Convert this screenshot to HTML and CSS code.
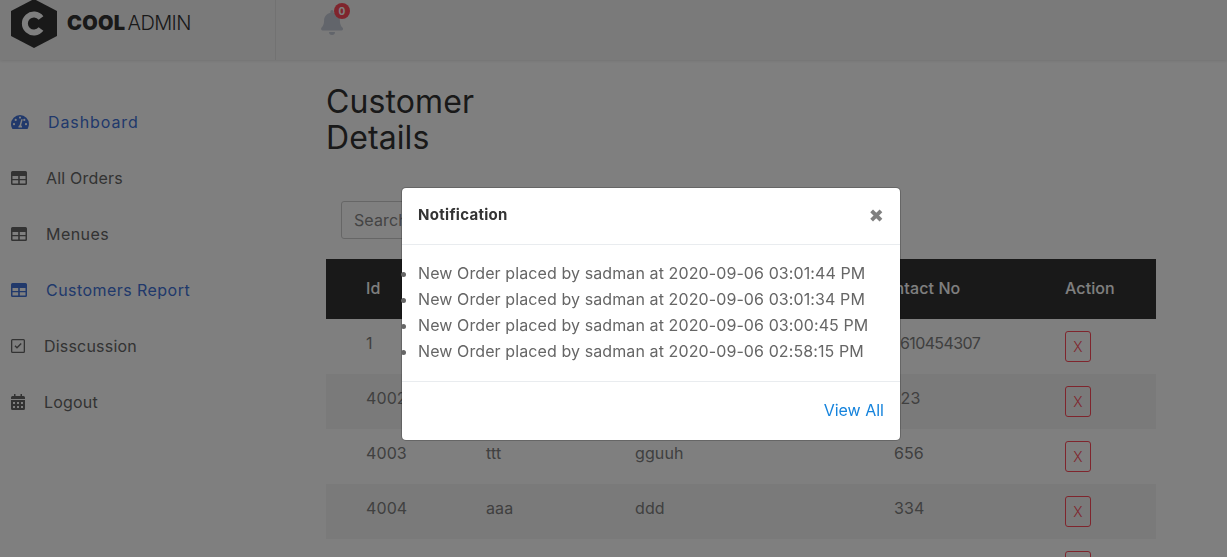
FILE: index.html
```html
<!DOCTYPE html>
<html lang="en">
<head>
    <meta charset="UTF-8">
    <meta name="viewport" content="width=device-width, initial-scale=1.0">
    <title>Customer Details</title>
    <link rel="stylesheet" href="styles.css">
</head>
<body>
    <header class="topbar">
        <div class="brand">
            <svg class="brand-logo" viewBox="0 0 46 50" width="46" height="50">
                <polygon points="23,0 46,12 46,37 23,49 0,37 0,12" fill="#333"/>
                <path d="M30 19a9 9 0 1 0 0 11" fill="none" stroke="#fff" stroke-width="6"/>
            </svg>
            <span class="brand-name"><b>COOL</b> ADMIN</span>
        </div>
        <div class="bell-wrap">
            <svg class="bell" viewBox="0 0 24 26" width="24" height="26">
                <path d="M12 26a3 3 0 0 0 3-3H9a3 3 0 0 0 3 3zM22.500 18.600c-1-1-2.600-2.600-2.600-7.300 0-3.800-2.700-6.800-6.300-7.600V2.500a1.600 1.600 0 0 0-3.200 0v1.200C6.800 4.500 4.100 7.500 4.100 11.300c0 4.700-1.600 6.300-2.600 7.300-.9 1-.2 3 1.100 3h19c1.300 0 2-2 .9-3z" fill="#c4cad6"/>
            </svg>
            <span class="badge">0</span>
        </div>
    </header>

    <div class="layout">
        <nav class="sidebar">
            <a class="nav-item nav-active" href="#">
                <svg class="nav-icon" viewBox="0 0 18 16" width="18" height="16"><path fill-rule="evenodd" d="M9 1a9 9 0 0 0-9 9c0 1.700.5 3.300 1.300 4.700.2.200.5.300.8.300h13.800c.3 0 .6-.1.8-.3A9 9 0 0 0 18 10a9 9 0 0 0-9-9zM9 2.500a1.100 1.100 0 1 1 0 2.200 1.100 1.100 0 0 1 0-2.200zM3 11.300a1.100 1.100 0 1 1 0-2.200 1.100 1.100 0 0 1 0 2.200zM4.700 7a1.100 1.100 0 1 1 0-2.200 1.100 1.100 0 0 1 0 2.200zM11 13.500H7.500c-.3-1 .3-2 1.100-2.300L10.200 5.500c.1-.4.500-.6.900-.5.400.1.600.5.500.9l-1.500 5.300c.8.500 1.200 1.600.9 2.300zM13.300 7a1.100 1.100 0 1 1 0-2.200 1.100 1.100 0 0 1 0 2.200zM15 11.300a1.100 1.100 0 1 1 0-2.200 1.100 1.100 0 0 1 0 2.200z"/></svg>
                <span class="nav-label nav-label-wide">Dashboard</span>
            </a>
            <a class="nav-item" href="#">
                <svg class="nav-icon" viewBox="0 0 16 14" width="16" height="14"><path fill-rule="evenodd" d="M1.500 0h13A1.500 1.500 0 0 1 16 1.500v11a1.500 1.500 0 0 1-1.500 1.500h-13A1.500 1.500 0 0 1 0 12.500v-11A1.500 1.500 0 0 1 1.500 0zM1.500 5v3h5.700V5zm7.300 0v3h5.700V5zM1.500 9.200v3.300h5.700V9.200zm7.300 0v3.300h5.700V9.200z"/></svg>
                <span class="nav-label nav-label-tight">All Orders</span>
            </a>
            <a class="nav-item" href="#">
                <svg class="nav-icon" viewBox="0 0 16 14" width="16" height="14"><path fill-rule="evenodd" d="M1.500 0h13A1.500 1.500 0 0 1 16 1.500v11a1.500 1.500 0 0 1-1.500 1.500h-13A1.500 1.500 0 0 1 0 12.500v-11A1.500 1.500 0 0 1 1.500 0zM1.500 5v3h5.700V5zm7.300 0v3h5.700V5zM1.500 9.200v3.300h5.700V9.200zm7.300 0v3.300h5.700V9.200z"/></svg>
                <span class="nav-label">Menues</span>
            </a>
            <a class="nav-item nav-active" href="#">
                <svg class="nav-icon" viewBox="0 0 16 14" width="16" height="14"><path fill-rule="evenodd" d="M1.500 0h13A1.500 1.500 0 0 1 16 1.500v11a1.500 1.500 0 0 1-1.500 1.500h-13A1.500 1.500 0 0 1 0 12.500v-11A1.500 1.500 0 0 1 1.500 0zM1.500 5v3h5.700V5zm7.300 0v3h5.700V5zM1.500 9.200v3.300h5.700V9.200zm7.300 0v3.300h5.700V9.200z"/></svg>
                <span class="nav-label">Customers Report</span>
            </a>
            <a class="nav-item" href="#">
                <svg class="nav-icon" viewBox="0 0 14 14" width="14" height="14"><path fill-rule="evenodd" d="M1.500 0h11A1.500 1.500 0 0 1 14 1.500v11a1.500 1.500 0 0 1-1.500 1.500h-11A1.500 1.500 0 0 1 0 12.500v-11A1.500 1.500 0 0 1 1.500 0zm0 1.300a.2.200 0 0 0-.2.200v11c0 .1.100.2.200.2h11a.2.200 0 0 0 .2-.2v-11a.2.200 0 0 0-.2-.2z"/><path d="M3.500 7.200l2.500 2.500 4.700-4.700-1-1-3.700 3.700-1.500-1.500z"/></svg>
                <span class="nav-label nav-label-tight">Disscussion</span>
            </a>
            <a class="nav-item" href="#">
                <svg class="nav-icon" viewBox="0 0 14 16" width="14" height="16"><path fill-rule="evenodd" d="M3 0h1.500v2h5V0H11v2h1.500A1.500 1.500 0 0 1 14 3.500V5H0V3.500A1.500 1.500 0 0 1 1.500 2H3zM0 6h14v8.500a1.500 1.500 0 0 1-1.500 1.500h-11A1.500 1.500 0 0 1 0 14.500zm2 2v2h2V8zm4 0v2h2V8zm4 0v2h2V8zm-8 4v2h2v-2zm4 0v2h2v-2zm4 0v2h2v-2z"/></svg>
                <span class="nav-label nav-label-tight">Logout</span>
            </a>
        </nav>

        <main class="content">
            <h2 class="page-title">Customer<br>Details</h2>
            <div class="search-row">
                <input class="search-input" type="text" placeholder="Search">
            </div>
            <table class="customers">
                <colgroup>
                    <col class="col-id"><col class="col-name"><col class="col-addr"><col class="col-phone"><col class="col-action">
                </colgroup>
                <thead>
                    <tr><th>Id</th><th>Name</th><th>Address</th><th class="th-contact">Contact No</th><th>Action</th></tr>
                </thead>
                <tbody>
                    <tr><td>1</td><td></td><td></td><td class="td-long">1610454307</td><td><button class="del-btn">X</button></td></tr>
                    <tr><td>4002</td><td></td><td></td><td>123</td><td><button class="del-btn">X</button></td></tr>
                    <tr><td>4003</td><td>ttt</td><td>gguuh</td><td>656</td><td><button class="del-btn">X</button></td></tr>
                    <tr><td>4004</td><td>aaa</td><td>ddd</td><td>334</td><td><button class="del-btn">X</button></td></tr>
                    <tr><td></td><td></td><td></td><td></td><td><button class="del-btn">X</button></td></tr>
                </tbody>
            </table>
        </main>
    </div>

    <div class="backdrop"></div>

    <div class="modal">
        <div class="modal-header">
            <h5 class="modal-title">Notification</h5>
            <span class="modal-close">&#10006;</span>
        </div>
        <div class="modal-body">
            <ul class="notif-list">
                <li>New Order placed by sadman at 2020-09-06 03:01:44 PM</li>
                <li>New Order placed by sadman at 2020-09-06 03:01:34 PM</li>
                <li>New Order placed by sadman at 2020-09-06 03:00:45 PM</li>
                <li>New Order placed by sadman at 2020-09-06 02:58:15 PM</li>
            </ul>
        </div>
        <div class="modal-footer">
            <a class="view-all" href="#">View All</a>
        </div>
    </div>
</body>
</html>
```

FILE: styles.css
```css
html, body {
    height: 100%;
}

body {
    font-family: Inter, "Open Sans", sans-serif;
    font-size: 16px;
    letter-spacing: 0.1px;
    color: #666;
    background-color: #fff;
    margin: 0;
    overflow: hidden;
}

a {
    text-decoration: none;
}

.topbar {
    display: flex;
    height: 60px;
    background-color: #f5f5f5;
    box-shadow: 0 1px 3px rgba(0, 0, 0, 0.1);
}

.brand {
    display: flex;
    align-items: center;
    gap: 10px;
    box-sizing: border-box;
    width: 276px;
    padding: 0 0 14px 11px;
    border-right: 1px solid #e5e5e5;
}

.brand-logo {
    flex: none;
    margin-top: 2px;
}

.brand-name {
    font-size: 20px;
    font-weight: 300;
    color: #333;
    letter-spacing: -0.6px;
    word-spacing: -3px;
}

.brand-name b {
    font-weight: 900;
    letter-spacing: 0.3px;
}

.bell-wrap {
    position: relative;
    margin: 9px 0 0 44px;
}

.badge {
    position: absolute;
    top: -6px;
    left: 14px;
    width: 16px;
    height: 16px;
    border-radius: 50%;
    background-color: #ff4b5a;
    color: #fff;
    font-size: 10px;
    font-weight: 700;
    line-height: 16px;
    text-align: center;
}

.layout {
    display: flex;
}

.sidebar {
    width: 326px;
    flex: none;
    padding-top: 34px;
}

.nav-item {
    display: flex;
    align-items: center;
    height: 56px;
    padding-left: 11px;
    letter-spacing: 0.45px;
    color: #666;
    fill: #666;
}

.nav-active {
    color: #4272d7;
    fill: #4272d7;
}

.nav-icon {
    flex: none;
}

.nav-label {
    margin-left: 19px;
}

.nav-label-wide {
    letter-spacing: 0.9px;
}

.nav-label-tight {
    letter-spacing: 0.2px;
}

.content {
    width: 830px;
}

.page-title {
    margin: 24px 0 0;
    font-size: 32px;
    font-weight: 400;
    line-height: 36px;
    letter-spacing: 0.1px;
    color: #333;
}

.search-row {
    margin: 45px 0 20px 15px;
}

.search-input {
    display: block;
    box-sizing: border-box;
    width: 200px;
    height: 38px;
    padding: 0 12px;
    border: 1px solid #ccc;
    border-radius: 3px;
    font: inherit;
    letter-spacing: inherit;
    background: transparent;
}

.search-input::placeholder {
    color: #888;
}

.customers {
    width: 830px;
    table-layout: fixed;
    border-collapse: collapse;
}

.col-id { width: 160px; }
.col-name { width: 149px; }
.col-addr { width: 259px; }
.col-phone { width: 171px; }
.col-action { width: 91px; }

.customers th {
    box-sizing: border-box;
    height: 60px;
    padding: 0 0 2px;
    background-color: #333;
    color: #fff;
    font-weight: 500;
    text-align: left;
}

.customers .th-contact {
    text-indent: -21px;
}

.customers th:first-child,
.customers td:first-child {
    padding-left: 40px;
}

.customers td {
    box-sizing: border-box;
    height: 55px;
    padding: 0;
    vertical-align: top;
    line-height: 48px;
    color: #808080;
}

.customers .td-long {
    letter-spacing: -0.6px;
}

.customers tbody tr:nth-child(even) {
    background-color: #f5f5f5;
}

.del-btn {
    display: block;
    width: 26px;
    height: 31px;
    padding: 0;
    margin-top: 12px;
    border: 1px solid #ff4b5a;
    border-radius: 3px;
    background: transparent;
    color: #ff4b5a;
    font: 300 14px Inter, sans-serif;
}

.backdrop {
    position: fixed;
    inset: 0;
    background-color: rgba(0, 0, 0, 0.5);
}

.modal {
    position: fixed;
    top: 187px;
    left: 401px;
    box-sizing: border-box;
    width: 500px;
    height: 254px;
    background-color: #fff;
    border: 1px solid rgba(0, 0, 0, 0.2);
    background-clip: padding-box;
    border-radius: 5px;
}

.modal-header {
    display: flex;
    align-items: center;
    justify-content: space-between;
    height: 56px;
    padding: 0 16px;
    border-bottom: 1px solid #e9ecef;
}

.modal-title {
    margin: 0 0 4px;
    font-size: 15px;
    font-weight: 700;
    letter-spacing: 0.3px;
    color: #333;
}

.modal-close {
    font-family: "DejaVu Sans", sans-serif;
    font-size: 18px;
    line-height: 20px;
    color: #808080;
    margin-bottom: 0;
}

.modal-body {
    padding: 15px 16px 17px;
}

.notif-list {
    margin: 0;
    padding: 0;
    line-height: 26px;
}

.modal-footer {
    display: flex;
    justify-content: flex-end;
    padding: 17px 16px;
    border-top: 1px solid #e9ecef;
    line-height: 22px;
}

.view-all {
    color: #1583dc;
    letter-spacing: 0;
}
```
